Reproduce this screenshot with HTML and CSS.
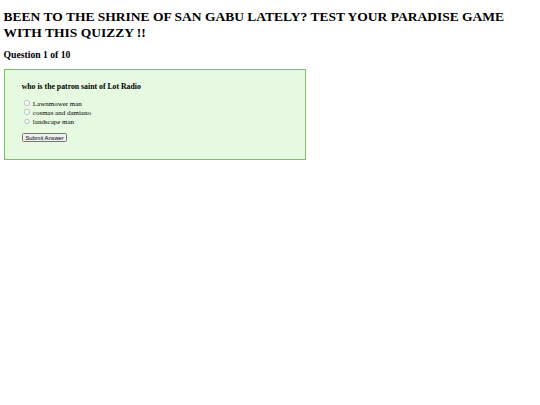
FILE: index.html
```html
<!DOCTYPE html>
<html>
<head>
<meta charset="utf-8">
<link rel="stylesheet" href="styles.css">
</head>
<body>
<div class="page">
  <h1 class="title">BEEN TO THE SHRINE OF SAN GABU LATELY? TEST YOUR PARADISE GAME WITH THIS QUIZZY !!</h1>
  <h2 class="progress">Question 1 of 10</h2>
  <div class="quiz">
    <h3 class="question">who is the patron saint of Lot Radio</h3>
    <div class="options">
      <label class="option"><input type="radio" name="answer"> Lawnmower man</label>
      <label class="option"><input type="radio" name="answer"> cosmas and damiano</label>
      <label class="option"><input type="radio" name="answer"> landscape man</label>
    </div>
    <button class="submit">Submit Answer</button>
  </div>
</div>
</body>
</html>
```

FILE: styles.css
```css
html, body {
  margin: 0;
  padding: 0;
  background: #ffffff;
}
.page {
  zoom: 0.45;
  padding: 8px;
  font-family: "Liberation Serif", "Times New Roman", serif;
  color: #000;
}
.title {
  font-size: 30px;
  line-height: 36px;
  font-weight: bold;
  margin: 12px 0 18px;
}
.progress {
  font-size: 21.5px;
  font-weight: bold;
  margin: 14px 0 18px;
}
.quiz {
  box-sizing: border-box;
  width: 671px;
  border: 3px solid #84c062;
  background: #e5fae0;
  padding: 10px 38px 38px;
}
.question {
  font-size: 17.3px;
  font-weight: bold;
  margin: 18px 0 17px;
}
.options {
  display: flex;
  flex-direction: column;
  font-size: 15.5px;
}
.option {
  display: block;
}
.option input {
  margin: 3px 3px 3px 5px;
}
.submit {
  margin-top: 15px;
  font-family: "Liberation Sans", Arial, sans-serif;
  font-size: 12.8px;
}
```
